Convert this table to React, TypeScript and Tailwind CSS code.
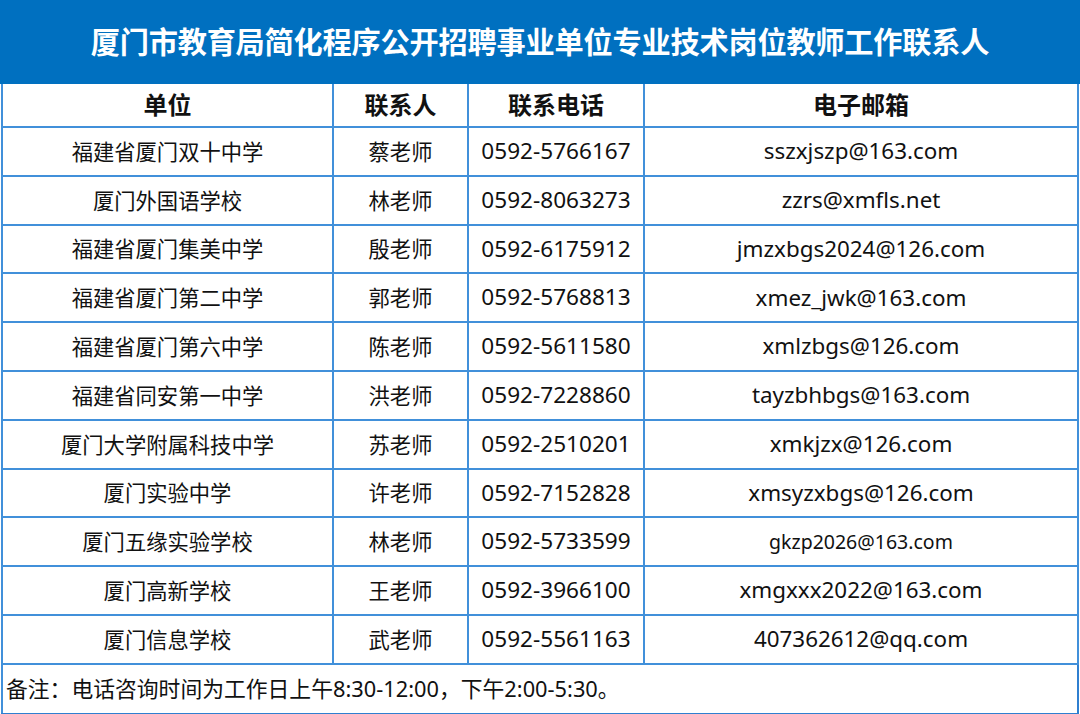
import React from "react";

const rows: [string, string, string, string, boolean?][] = [
  ["福建省厦门双十中学", "蔡老师", "0592-5766167", "sszxjszp@163.com"],
  ["厦门外国语学校", "林老师", "0592-8063273", "zzrs@xmfls.net"],
  ["福建省厦门集美中学", "殷老师", "0592-6175912", "jmzxbgs2024@126.com"],
  ["福建省厦门第二中学", "郭老师", "0592-5768813", "xmez_jwk@163.com"],
  ["福建省厦门第六中学", "陈老师", "0592-5611580", "xmlzbgs@126.com"],
  ["福建省同安第一中学", "洪老师", "0592-7228860", "tayzbhbgs@163.com"],
  ["厦门大学附属科技中学", "苏老师", "0592-2510201", "xmkjzx@126.com"],
  ["厦门实验中学", "许老师", "0592-7152828", "xmsyzxbgs@126.com"],
  ["厦门五缘实验学校", "林老师", "0592-5733599", "gkzp2026@163.com", true],
  ["厦门高新学校", "王老师", "0592-3966100", "xmgxxx2022@163.com"],
  ["厦门信息学校", "武老师", "0592-5561163", "407362612@qq.com"],
];

const font = { fontFamily: '"Noto Sans", "Noto Sans CJK SC", sans-serif' };

export default function App() {
  return (
    <div className="w-[1080px] h-[714px] bg-white text-[#111]" style={font}>
      <div className="h-[84px] bg-[#0070c0] flex items-center justify-center pt-[2px]">
        <h1 className="text-white font-bold text-[29.2px] leading-none tracking-[-0.2px]">
          厦门市教育局简化程序公开招聘事业单位专业技术岗位教师工作联系人
        </h1>
      </div>
      <table className="w-[1078px] ml-[1px] border-collapse table-fixed">
        <colgroup>
          <col className="w-[331px]" />
          <col className="w-[135px]" />
          <col className="w-[176px]" />
          <col />
        </colgroup>
        <thead>
          <tr className="h-[43px]">
            {["单位", "联系人", "联系电话", "电子邮箱"].map((h) => (
              <th
                key={h}
                className="border-2 border-[#4190da] border-t-0 text-[24px] font-bold text-center leading-none p-0"
              >
                {h}
              </th>
            ))}
          </tr>
        </thead>
        <tbody>
          {rows.map(([a, b, c, d, small]) => (
            <tr key={c} className="h-[48.8px]">
              <td className="border-2 border-[#4190da] text-center text-[21.3px] leading-none p-0">{a}</td>
              <td className="border-2 border-[#4190da] text-center text-[21.3px] leading-none p-0">{b}</td>
              <td className="border-2 border-[#4190da] text-center text-[22.6px] leading-none p-0">{c}</td>
              <td
                className={
                  small
                    ? "border-2 border-[#4190da] text-center text-[19.5px] leading-none p-0"
                    : "border-2 border-[#4190da] text-center text-[22.4px] leading-none p-0"
                }
              >
                {d}
              </td>
            </tr>
          ))}
          <tr className="h-[50px]">
            <td
              colSpan={4}
              className="border-2 border-[#4190da] border-r-[#2f7fd0] border-b-[#2f7fd0] text-left text-[21.8px] leading-none pl-[3px] py-0"
            >
              备注：电话咨询时间为工作日上午8:30-12:00，下午2:00-5:30。
            </td>
          </tr>
        </tbody>
      </table>
    </div>
  );
}
